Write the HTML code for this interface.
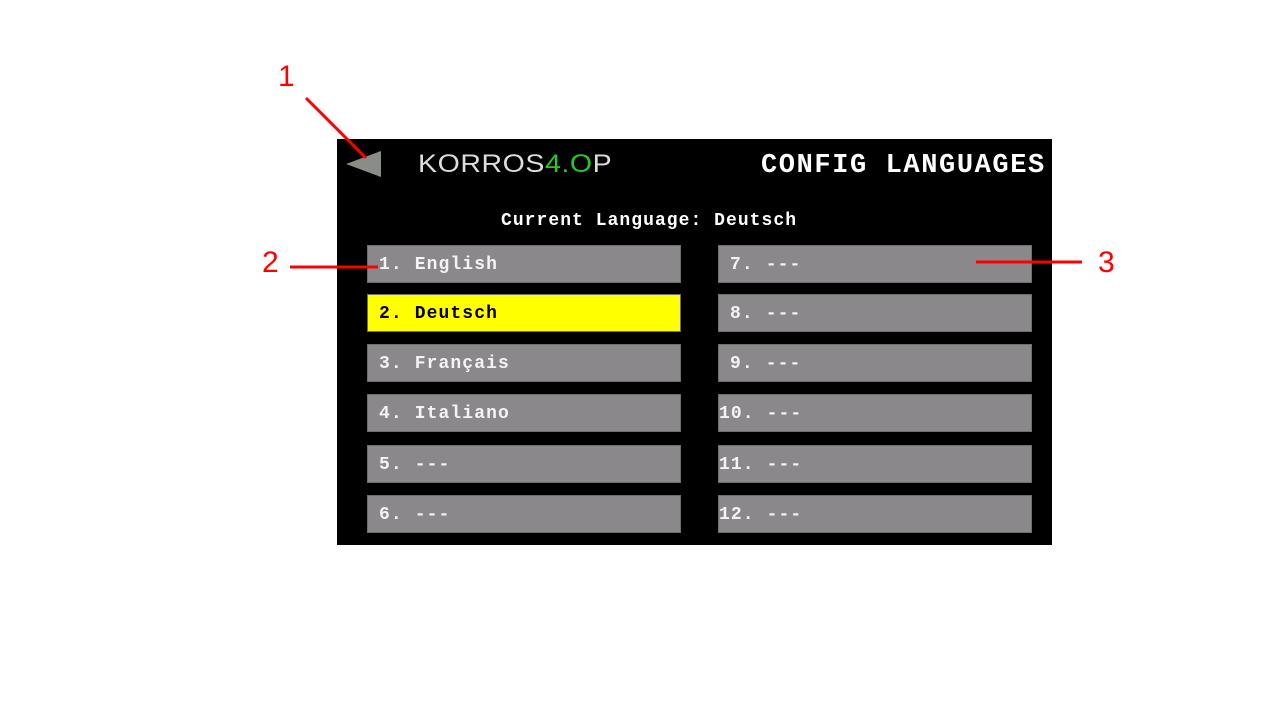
<!DOCTYPE html><html><head><style>
body{margin:0;width:1280px;height:720px;background:#fff;position:relative;overflow:hidden;font-family:"Liberation Mono",monospace;}
.p{position:absolute;left:337px;top:139px;width:715px;height:406px;background:#000;}
.b{position:absolute;width:314px;height:38px;background:#8a888a;border:1px solid #6e6e6e;box-sizing:border-box;color:#f4f4f4;font-weight:bold;font-size:18px;letter-spacing:1.1px;line-height:38px;padding-left:11px;}
.y{background:#ffff00;color:#000;}
.n{position:absolute;color:#f00;font-family:"Liberation Sans",sans-serif;font-size:30px;}
</style></head><body>
<div class="p"></div>
<div style="position:absolute;left:418px;top:150px;font-family:'Liberation Sans',sans-serif;font-size:25px;color:#ddd;letter-spacing:0.5px;transform:scaleX(1.14);transform-origin:left;font-weight:300">KORROS<span style="color:#2c2">4.O</span>P</div>
<div style="position:absolute;left:761px;top:151px;color:#fff;font-weight:bold;font-size:27px;letter-spacing:1.6px;">CONFIG LANGUAGES</div>
<div style="position:absolute;left:501px;top:211px;color:#fff;font-weight:bold;font-size:18px;letter-spacing:1.04px;">Current Language: Deutsch</div>
<div class="n" style="left:278px;top:60px">1</div>
<div class="n" style="left:262px;top:246px">2</div>
<div class="n" style="left:1098px;top:246px">3</div>
<div class="b" style="left:367px;top:245px">1. English</div>
<div class="b y" style="left:367px;top:294px">2. Deutsch</div>
<div class="b" style="left:367px;top:344px">3. Français</div>
<div class="b" style="left:367px;top:394px">4. Italiano</div>
<div class="b" style="left:367px;top:445px">5. ---</div>
<div class="b" style="left:367px;top:495px">6. ---</div>
<div class="b" style="left:718px;top:245px">7. ---</div>
<div class="b" style="left:718px;top:294px">8. ---</div>
<div class="b" style="left:718px;top:344px">9. ---</div>
<div class="b" style="left:718px;top:394px;padding-left:0">10. ---</div>
<div class="b" style="left:718px;top:445px;padding-left:0">11. ---</div>
<div class="b" style="left:718px;top:495px;padding-left:0">12. ---</div>
<svg style="position:absolute;left:0;top:0" width="1280" height="720">
<polygon points="346,164 381,151 381,177" fill="#8a8c88"/>
<line x1="306" y1="98" x2="366" y2="158" stroke="#f00" stroke-width="3"/>
<line x1="290" y1="267" x2="378" y2="267" stroke="#f00" stroke-width="3"/>
<line x1="976" y1="262" x2="1082" y2="262" stroke="#f00" stroke-width="3"/>
</svg>
</body></html>
